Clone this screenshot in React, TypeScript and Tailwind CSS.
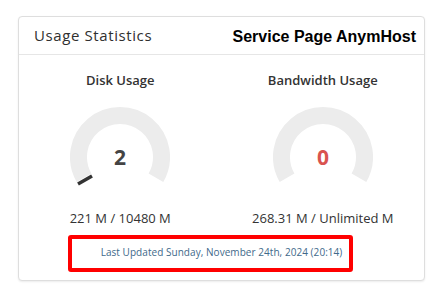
import React from 'react';

interface GaugeProps {
  title: string;
  value: string;
  valueClass: string;
  detail: string;
  showNeedle?: boolean;
}

const Gauge: React.FC<GaugeProps> = ({ title, value, valueClass, detail, showNeedle }) => {
  return (
    <div className="flex flex-col items-center">
      <div className="text-[13px] leading-[18px] font-semibold text-[#333]">{title}</div>
      <svg width="100" height="80" viewBox="0 0 100 80" className="mt-[18px]">
        {/* background ring, 240 degree sweep */}
        <path
          d="M 14.06 70.75 A 41.5 41.5 0 1 1 85.94 70.75"
          fill="none"
          stroke="#ececec"
          strokeWidth="17"
        />
        {showNeedle && (
          <line x1="22" y1="69" x2="8" y2="77" stroke="#333" strokeWidth="3.5" />
        )}
        <text
          x="50"
          y="50"
          textAnchor="middle"
          dominantBaseline="central"
          className={valueClass}
          style={{ fontFamily: '"Open Sans", sans-serif' }}
          fontSize="21"
          fontWeight="700"
        >
          {value}
        </text>
      </svg>
      <div className="mt-[22px] text-[13px] leading-[18px] text-[#333]">{detail}</div>
    </div>
  );
};

export default function App() {
  return (
    <div className="w-[442px] h-[296px] bg-white pt-4 pl-[18px] font-['Open_Sans',sans-serif]">
      <div className="relative w-[407px] h-[265px] border border-[#dedede] rounded shadow-[0_1px_2px_rgba(0,0,0,0.08)] bg-white">
        {/* Header */}
        <div className="h-[38px] border-b border-[#e6e6e6] flex items-center justify-between pl-[15px] pr-[8px]">
          <span className="text-[15px] text-[#2f2f2f] tracking-[0.6px]">Usage Statistics</span>
          <span className="text-[16px] font-bold text-black font-['Liberation_Sans',Arial,sans-serif] mt-[2px]">
            Service Page AnymHost
          </span>
        </div>

        {/* Gauges */}
        <div className="grid grid-cols-2 pt-4">
          <Gauge title="Disk Usage" value="2" valueClass="fill-[#444]" detail="221 M / 10480 M" showNeedle />
          <Gauge title="Bandwidth Usage" value="0" valueClass="fill-[#d9534f]" detail="268.31 M / Unlimited M" />
        </div>

        <div className="mt-[18px] text-center text-[10px] leading-[14px] tracking-[0.05px] text-[#41698a]">
          Last Updated Sunday, November 24th, 2024 (20:14)
        </div>

        {/* red annotation box */}
        <div className="absolute left-[49px] top-[218px] w-[285px] h-[37px] border-4 border-[#ff0000] rounded-[3px]" />
      </div>
    </div>
  );
}
